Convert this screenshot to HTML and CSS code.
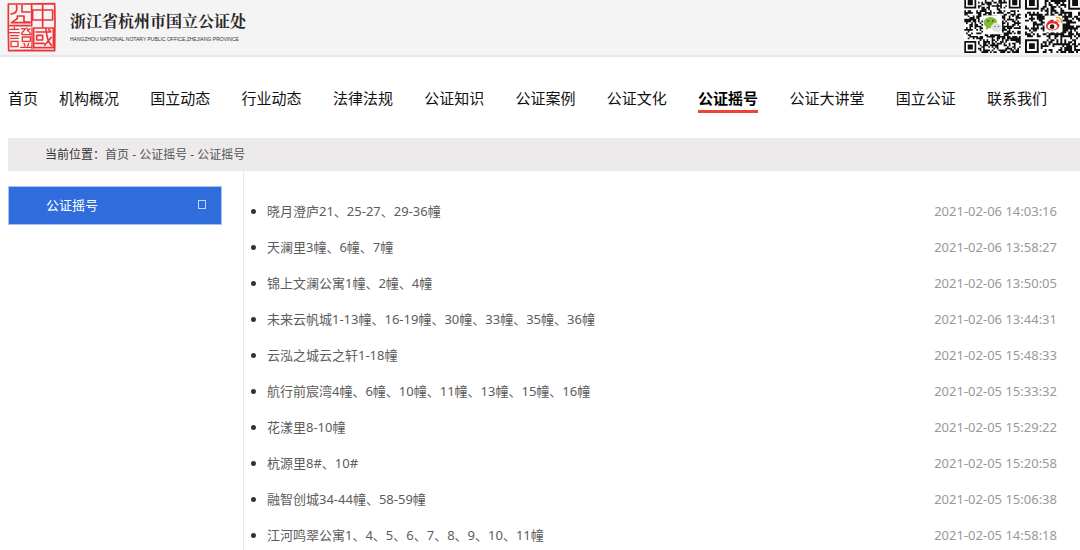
FILE: index.html
```html
<!DOCTYPE html>
<html lang="zh-CN">
<head>
<meta charset="utf-8">
<meta name="viewport" content="width=device-width, initial-scale=1">
<title>公证摇号</title>
<link rel="stylesheet" href="styles.css">
</head>
<body>
<header class="header">
  <svg class="seal" viewBox="0 0 192 168" aria-hidden="true">
    <g fill="none" stroke="#ec3338" stroke-width="5" stroke-linejoin="round" stroke-linecap="round">
      <path d="M25 12H60L164 11L165 60L164 152L90 151L26 152L25 90Z"/>
      <path d="M98 30H158V60H98ZM128 15V80M95 14V78"/>
      <path d="M50 16V30Q48 40 33 42M66 16V36H90M52 48H72V66H90M52 48V56L34 68H90M30 77H90"/>
      <path d="M101 84H160V143H101ZM108 96H152M110 106H128V120H110ZM106 130H132M138 88C140 112 144 126 154 136M154 112L134 136M146 89L152 94"/>
      <path stroke-width="4" d="M30 88H56M28 98H58M32 107H55M32 115H55M33 124H54V140H33ZM43 82V88"/>
      <path stroke-width="4" d="M64 86H76L64 102M80 84L92 102M90 86L82 92M68 104H90M67 111H91V124H67ZM72 130L75 138M86 130L83 138M62 142H95M96 84V146"/>
    </g>
  </svg>
  <div class="brand">
    <div class="brand-name">浙江省杭州市国立公证处</div>
    <div class="brand-sub">HANGZHOU NATIONAL NOTARY PUBLIC OFFICE,ZHEJIANG PROVINCE</div>
  </div>
  <div class="codes">
    <svg class="code code-wechat" viewBox="0 2 33 31" data-size="33" data-seed="71" role="img" aria-label="微信二维码">
      <g class="modules"></g>
      <rect x="11" y="11" width="11" height="11" fill="#fff"/>
      <ellipse cx="15.3" cy="15.2" rx="3.9" ry="3.3" fill="#83b83a"/>
      <path d="M13 17L12.5 19.5L15.5 18Z" fill="#83b83a"/>
      <ellipse cx="18.9" cy="18.1" rx="3.1" ry="2.6" fill="#dfe1e0" stroke="#fff" stroke-width=".4"/>
      <path d="M20 20L21 21.3L19 20.7Z" fill="#dfe1e0"/>
      <g fill="#36501b"><circle cx="14" cy="14.2" r=".5"/><circle cx="16.7" cy="14.2" r=".5"/><circle cx="17.9" cy="17.4" r=".35"/><circle cx="19.9" cy="17.4" r=".35"/></g>
    </svg>
    <svg class="code code-weibo" viewBox="0 2 28 27" data-size="29" data-seed="29" role="img" aria-label="微博二维码">
      <g class="modules"></g>
      <rect x="10" y="10" width="9" height="8.5" fill="#fff"/>
      <path d="M10.7 15.4C10.7 13.3 13.5 11.5 14.4 12.1C14.8 12.4 14.6 13 14.6 13C16 12.5 17 12.8 16.7 14C18.2 14.5 17.6 16.2 16 17C13.8 18.1 10.7 17.4 10.7 15.4Z" fill="#e32b28"/>
      <ellipse cx="14" cy="15.5" rx="2.5" ry="1.7" fill="#fff"/>
      <circle cx="13.8" cy="15.6" r="1.2" fill="#222"/>
      <path d="M15.8 10.9C17.8 10.5 19 12 18.4 13.7M16 12.2C16.9 12 17.4 12.7 17.2 13.3" fill="none" stroke="#f39a2b" stroke-width=".7"/>
    </svg>
  </div>
</header>

<nav class="nav" aria-label="主导航">
  <a class="nav-link" href="#">首页</a>
  <div class="nav-items">
    <a class="nav-link" href="#">机构概况</a>
    <a class="nav-link" href="#">国立动态</a>
    <a class="nav-link" href="#">行业动态</a>
    <a class="nav-link" href="#">法律法规</a>
    <a class="nav-link" href="#">公证知识</a>
    <a class="nav-link" href="#">公证案例</a>
    <a class="nav-link" href="#">公证文化</a>
    <a class="nav-link nav-link-active" href="#" aria-current="page">公证摇号</a>
    <a class="nav-link" href="#">公证大讲堂</a>
    <a class="nav-link" href="#">国立公证</a>
    <a class="nav-link" href="#">联系我们</a>
  </div>
</nav>

<div class="page">
  <div class="crumbs"><span class="crumbs-label">当前位置：</span><a href="#">首页</a> - <a href="#">公证摇号</a> - <a href="#">公证摇号</a></div>
  <div class="columns">
    <aside class="side">
      <a class="side-link" href="#"><span>公证摇号</span><span class="side-mark"></span></a>
    </aside>
    <main class="content">
      <ul class="list">
        <li class="row"><a href="#">晓月澄庐21、25-27、29-36幢</a><time>2021-02-06 14:03:16</time></li>
        <li class="row"><a href="#">天澜里3幢、6幢、7幢</a><time>2021-02-06 13:58:27</time></li>
        <li class="row"><a href="#">锦上文澜公寓1幢、2幢、4幢</a><time>2021-02-06 13:50:05</time></li>
        <li class="row"><a href="#">未来云帆城1-13幢、16-19幢、30幢、33幢、35幢、36幢</a><time>2021-02-06 13:44:31</time></li>
        <li class="row"><a href="#">云泓之城云之轩1-18幢</a><time>2021-02-05 15:48:33</time></li>
        <li class="row"><a href="#">航行前宸湾4幢、6幢、10幢、11幢、13幢、15幢、16幢</a><time>2021-02-05 15:33:32</time></li>
        <li class="row"><a href="#">花漾里8-10幢</a><time>2021-02-05 15:29:22</time></li>
        <li class="row"><a href="#">杭源里8#、10#</a><time>2021-02-05 15:20:58</time></li>
        <li class="row"><a href="#">融智创城34-44幢、58-59幢</a><time>2021-02-05 15:06:38</time></li>
        <li class="row"><a href="#">江河鸣翠公寓1、4、5、6、7、8、9、10、11幢</a><time>2021-02-05 14:58:18</time></li>
      </ul>
    </main>
  </div>
</div>
<script src="codes.js"></script>
</body>
</html>
```

FILE: styles.css
```css
* { box-sizing: border-box; }

body {
  margin: 0;
  background: #fff;
  color: #333;
  font-family: "Noto Sans", "Noto Sans CJK SC", sans-serif;
  font-size: 13px;
  overflow-x: hidden;
}

a { color: inherit; text-decoration: none; }

.header {
  display: flex;
  align-items: flex-start;
  height: 57px;
  background: #f4f4f4;
  border-bottom: 2px solid #e8e8e8;
}

.seal { width: 64px; height: 56px; flex: none; }

.brand { padding: 10px 0 0 6px; white-space: nowrap; }

.brand-name {
  font-family: "Noto Serif CJK SC", "Noto Sans CJK SC", serif;
  font-size: 16px;
  font-weight: 700;
  line-height: 22px;
  color: #2b2727;
}

.brand-sub {
  font-family: "Liberation Sans", sans-serif;
  font-size: 5px;
  line-height: 14px;
  color: #333;
}

.codes { display: flex; gap: 4px; margin-left: auto; }

.code { display: block; height: 53px; background: #fff; }
.code-wechat { width: 57px; }
.code-weibo { width: 55px; }
.modules { fill: #111; }

.nav {
  display: flex;
  gap: 21px;
  padding: 29px 33px 25px 8px;
  font-size: 15px;
  line-height: 24px;
  color: #111;
  white-space: nowrap;
}

.nav-items { flex: 1; display: flex; justify-content: space-between; }

.nav-link { border-bottom: 3px solid transparent; }
.nav-link-active { font-weight: 700; color: #000; border-bottom-color: #ee4433; }

.page { padding-left: 8px; }

.crumbs {
  padding: 0 37px;
  background: #eceaea;
  font-size: 12px;
  line-height: 33px;
  color: #555;
}

.crumbs-label { color: #333; }

.columns { display: flex; }

.side { width: 235px; flex: none; padding: 15px 21px 0 0; }

.side-link {
  display: flex;
  align-items: center;
  justify-content: space-between;
  padding: 0 15px 0 37px;
  border: 1px solid #aac1ee;
  background: #2f6ddc;
  color: #fff;
  line-height: 37px;
}

.side-mark { width: 8px; height: 9px; margin-bottom: 3px; border: 1px solid #c5d6f6; }

.content { flex: 1; padding: 22px 23px 0 23px; border-left: 1px solid #e8e8e8; }

.list { margin: 0; padding: 0; list-style: none; }

.row {
  position: relative;
  display: flex;
  justify-content: space-between;
  line-height: 36px;
  color: #5c5c5c;
}

.row::before {
  content: "";
  position: absolute;
  left: -16px;
  top: 16px;
  width: 5px;
  height: 5px;
  border-radius: 50%;
  background: #333;
}

.row time { color: #999; }
```

FILE: codes.js
```js
// Fills each code with square modules and the three corner markers.
const NS = "http://www.w3.org/2000/svg";

document.querySelectorAll(".code").forEach((svg) => {
  const n = Number(svg.dataset.size);
  let state = Number(svg.dataset.seed);
  const next = () => (state = (state * 16807) % 2147483647) / 2147483647;
  const marker = (x, y) =>
    `M${x} ${y}h7v7h-7zM${x + 1} ${y + 1}v5h5v-5zM${x + 2} ${y + 2}h3v3h-3z`;
  let d = marker(0, 0) + marker(n - 7, 0) + marker(0, n - 7);
  for (let y = 0; y < n; y++) {
    for (let x = 0; x < n; x++) {
      const dark = next() < 0.52;
      const corner = (y < 8 && (x < 8 || x >= n - 8)) || (y >= n - 8 && x < 8);
      if (dark && !corner) d += `M${x} ${y}h1v1h-1z`;
    }
  }
  const path = document.createElementNS(NS, "path");
  path.setAttribute("d", d);
  svg.querySelector(".modules").append(path);
});
```
